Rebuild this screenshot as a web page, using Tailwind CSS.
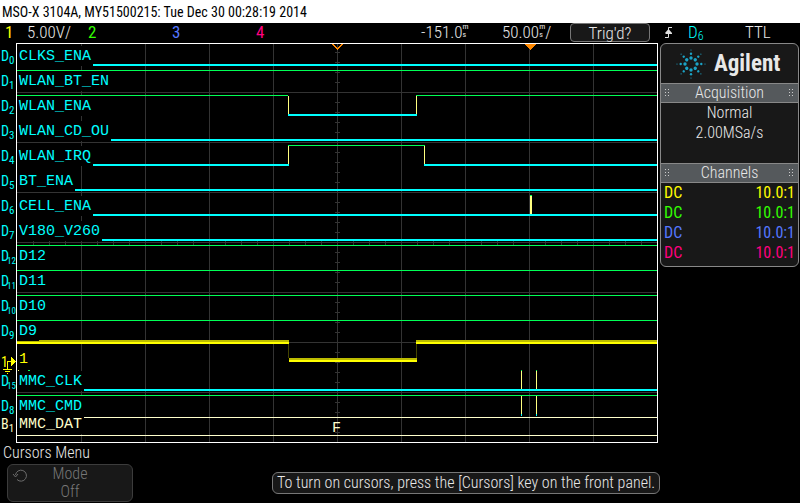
<!DOCTYPE html>
<html lang="en">
<head>
  <meta charset="UTF-8" />
  <meta name="viewport" content="width=device-width, initial-scale=1.0"/>
  <title>MSO-X 3104A</title>
  <script src="https://cdn.jsdelivr.net/npm/@tailwindcss/browser@4"></script>
</head>
<body class="bg-black text-[#e8e8e8] min-h-screen font-['Roboto_Condensed','Roboto',sans-serif] font-light text-[17px] leading-5">

  <!-- Title bar -->
  <header class="bg-white text-black h-[23px] px-0.5 text-[14px] leading-6 font-normal whitespace-nowrap">MSO-X 3104A, MY51500215: Tue Dec 30 00:28:19 2014</header>

  <!-- Status row -->
  <div class="grid grid-cols-[22px_61px_84px_84px_1fr_81px_68px_80px_14px_24px_57px_55px] h-5 pl-[5px] leading-[18px] whitespace-nowrap">
    <span class="text-[#ffff00] font-normal">1</span>
    <span>5.00V/</span>
    <span class="text-[#33ff00] font-normal">2</span>
    <span class="text-[#5577ff] font-normal">3</span>
    <span class="text-[#ff0080] font-normal">4</span>
    <span class="flex">-151.0<span class="flex flex-col text-[8px] leading-[8px] font-normal"><span>m</span><span>s</span></span></span>
    <span class="flex">50.00<span class="flex flex-col text-[8px] leading-[8px] font-normal"><span>m</span><span>s</span></span>/</span>
    <button class="h-[19px] border border-[#777] rounded bg-[#181818] leading-4">Trig'd?</button>
    <span></span>
    <svg class="w-3 h-4 mt-0.5" viewBox="0 0 12 16" fill="none" stroke="#e0e0e0">
      <path d="M1 12.500H4.500V2.500H8M1.500 8.500H8"/>
      <path d="M4.500 4L8 8H1Z" fill="#e0e0e0" stroke="none"/>
    </svg>
    <span class="flex text-[#00ffff]">D<span class="text-[12px] leading-[26px]">6</span></span>
    <span>TTL</span>
  </div>

  <div class="flex items-start">
    <!-- Scope display -->
    <main class="flex-1 flex">
      <ul id="gutter" class="w-4 pt-px pl-px text-[#00ffff] text-[14px] font-normal"></ul>
      <div class="relative flex-1 border border-white">
        <svg id="plot" class="block w-full h-[398px]" viewBox="0 0 640 398" preserveAspectRatio="none" shape-rendering="crispEdges"></svg>
        <ul id="names" class="absolute top-0 left-0 font-['Liberation_Mono',monospace] font-normal text-[15px] leading-[22px] text-[#00ffff]"></ul>
      </div>
    </main>

    <!-- Side panel -->
    <aside class="w-[142px] pl-0.5 pr-px">
      <div class="border border-[#888] rounded-md bg-[#181818] h-[224px] text-center">
        <div class="h-[39px] flex items-center gap-2 pl-[15px]">
          <svg id="spark" class="w-[30px] h-[30px]" viewBox="-15 -15 30 30" fill="#1ba3c6"></svg>
          <span class="text-[23px] font-bold leading-6">Agilent</span>
        </div>
        <h2 class="flex justify-between items-center h-5 px-1 bg-[#55595c] border-y border-[#888] text-[16px]">
          <svg class="w-1.5 h-2" viewBox="0 0 6 8" fill="#ccc"><path d="M0 0h1v1H0zM3 0h1v1H3zM0 3h1v1H0zM3 3h1v1H3zM0 6h1v1H0zM3 6h1v1H3z"/></svg>
          Acquisition
          <svg class="w-1.5 h-2" viewBox="0 0 6 8" fill="#ccc"><path d="M1 0h1v1H1zM4 0h1v1H4zM1 3h1v1H1zM4 3h1v1H4zM1 6h1v1H1zM4 6h1v1H4z"/></svg>
        </h2>
        <div class="h-[60px] text-[16px]">
          <p>Normal</p>
          <p>2.00MSa/s</p>
        </div>
        <h2 class="flex justify-between items-center h-5 px-1 bg-[#55595c] border-y border-[#888] text-[16px]">
          <svg class="w-1.5 h-2" viewBox="0 0 6 8" fill="#ccc"><path d="M0 0h1v1H0zM3 0h1v1H3zM0 3h1v1H0zM3 3h1v1H3zM0 6h1v1H0zM3 6h1v1H3z"/></svg>
          Channels
          <svg class="w-1.5 h-2" viewBox="0 0 6 8" fill="#ccc"><path d="M1 0h1v1H1zM4 0h1v1H4zM1 3h1v1H1zM4 3h1v1H4zM1 6h1v1H1zM4 6h1v1H4z"/></svg>
        </h2>
        <div class="px-[3px] font-normal text-[16px]">
          <p class="flex justify-between text-[#ffff00]"><span>DC</span><span>10.0:1</span></p>
          <p class="flex justify-between text-[#33ff00]"><span>DC</span><span>10.0:1</span></p>
          <p class="flex justify-between text-[#5577ff]"><span>DC</span><span>10.0:1</span></p>
          <p class="flex justify-between text-[#ff0080]"><span>DC</span><span>10.0:1</span></p>
        </div>
      </div>
    </aside>
  </div>

  <!-- Softkey menu -->
  <footer class="text-[16px]">
    <h2 class="pl-[3px] h-[21px]">Cursors Menu</h2>
    <div class="flex pl-[7px]">
      <button disabled class="relative w-[126px] h-[38px] border border-[#3c3c3c] rounded-md bg-[#181818] text-[#777777] text-[16px] leading-[18px]">
        <svg class="absolute left-1 top-1 w-4 h-3.5" viewBox="0 0 16 14" fill="none" stroke="#6c6c6c"><path d="M3.500 6A5.500 5.500 0 1 1 5 10.500M1 5L3.500 8L6 5"/></svg>
        Mode<br>Off
      </button>
      <p class="ml-[139px] mt-2 h-[22px] px-1 border border-[#777] rounded-md bg-[#181818] whitespace-nowrap">To turn on cursors, press the [Cursors] key on the front panel.</p>
    </div>
  </footer>

  <script>
    // [gutter letter, gutter index, signal name]
    const rows = [
      ["D", "0", "CLKS_ENA"], ["D", "1", "WLAN_BT_EN"], ["D", "2", "WLAN_ENA"], ["D", "3", "WLAN_CD_OU"],
      ["D", "4", "WLAN_IRQ"], ["D", "5", "BT_ENA"], ["D", "6", "CELL_ENA"], ["D", "7", "V180_V260"],
      ["D", "12", "D12"], ["D", "11", "D11"], ["D", "10", "D10"], ["D", "9", "D9"],
      ["1", "", "1"], ["D", "15", "MMC_CLK"], ["D", "8", "MMC_CMD"], ["B", "1", "MMC_DAT"]
    ];

    let gutter = "", names = "";
    rows.forEach(([letter, index, name]) => {
      const height = name === "MMC_CMD" ? "h-[18px]" : name === "MMC_DAT" ? "h-[22px]" : "h-[25px]";
      const color = name === "MMC_DAT" ? "text-[#ffffcc]" : name === "1" ? "text-[#ffff00]" : "";
      const pad = name === "1" ? "pt-[5px]" : "pt-0.5";
      if (name === "1") {
        gutter += `<li class="${height} ${color} relative leading-9">1<svg class="absolute left-0 top-0 w-[15px] h-[30px]" viewBox="0 0 15 30" fill="none" stroke="#ffff00" shape-rendering="crispEdges">
          <path d="M6.500 25V17.500H11M2 25.500H11M4 27.500H9M6 29.500H7"/><path d="M10 12L15 17.500L10 23Z" fill="#ffff00" stroke="none"/></svg></li>`;
      } else {
        const size = index.length > 1 ? "text-[9px] -ml-0.5" : "text-[11px]";
        gutter += `<li class="${height} ${color} flex leading-6">${letter}<span class="${size} leading-[34px]">${index}</span></li>`;
      }
      names += `<li class="${height} ${color} ${pad}"><span class="block w-fit h-5 px-0.5 bg-black">${name}</span></li>`;
    });
    document.getElementById("gutter").innerHTML = gutter;
    document.getElementById("names").innerHTML = names;

    const rect = (x, y, w, h, fill) => `<rect x="${x}" y="${y}" width="${w}" height="${h}" fill="${fill}"/>`;
    const GRID = "#333333", CYAN = "#00ffff", GREEN = "#00ff55", EDGE = "#ffff80", BUS = "#ffffcc";
    let p = "";

    // Graticule
    for (let x = 64; x < 640; x += 64) p += rect(x, 0, 1, 398, GRID);
    for (let y = 48; y < 398; y += 50) p += rect(0, y, 640, 1, GRID);
    for (let y = 8; y < 398; y += 10) p += rect(318, y, 5, 1, GRID);
    for (let x = 16; x < 640; x += 16) p += rect(x, 197, 1, 4, GRID);

    // Low and high levels
    [20, 95, 145, 170, 195, 345].forEach(y => p += rect(0, y, 640, 2, CYAN));
    [26, 201, 226, 251, 276, 351].forEach(y => p += rect(0, y, 640, 1, GREEN));

    // D2 pulse
    p += rect(0, 51, 271, 1, GREEN) + rect(399, 51, 241, 1, GREEN);
    p += rect(271, 52, 1, 18, EDGE) + rect(399, 52, 1, 18, EDGE) + rect(271, 70, 129, 2, CYAN);
    // D4 pulse
    p += rect(0, 120, 272, 2, CYAN) + rect(407, 120, 233, 2, CYAN);
    p += rect(271, 102, 1, 18, EDGE) + rect(407, 102, 1, 18, EDGE) + rect(271, 101, 137, 1, GREEN);
    // D6 glitch
    p += rect(513, 152, 2, 18, EDGE) + rect(513, 151, 2, 1, GREEN);

    // Analog channel 1
    [[0, 296, 272], [399, 296, 241], [272, 314, 128]].forEach(([x, y, w]) => {
      p += rect(x, y, w, 2, "#bbbb00") + rect(x, y + 2, w, 2, "#ffff00");
    });
    p += rect(271, 300, 1, 14, "#444400") + rect(399, 300, 1, 14, "#444400");

    // MMC bursts
    [504, 519].forEach(x => {
      p += rect(x, 326, 1, 1, GREEN) + rect(x, 327, 1, 18, EDGE);
      p += rect(x, 352, 1, 18, EDGE) + rect(x, 370, 1, 2, CYAN);
    });
    p += rect(1, 326, 1, 2, EDGE) + rect(11, 326, 2, 1, GREEN) + rect(11, 327, 2, 1, EDGE);
    p += rect(1, 352, 1, 1, EDGE) + rect(11, 352, 2, 1, EDGE);

    // Bus
    p += rect(0, 373, 640, 1, BUS) + rect(0, 391, 640, 1, BUS);
    p += `<text x="315" y="388" font-family="Liberation Mono, monospace" font-size="15" font-weight="400" fill="${BUS}">F</text>`;

    // Trigger and time reference markers
    p += `<path d="M315 0L320.500 5L326 0" fill="none" stroke="#ff8800" stroke-width="1.500"/>`;
    p += `<path d="M508 0H519L513.500 6Z" fill="#ff8800"/>`;
    document.getElementById("plot").innerHTML = p;

    // Spark logo: eight rays of shrinking dots
    let s = "";
    for (let a = 0; a < 360; a += 45) {
      [[6, 1.7], [10.3, 1.2], [14, 0.6]].forEach(([d, r]) => {
        s += `<circle cx="${d}" cy="0" r="${r}" transform="rotate(${a})"/>`;
      });
    }
    document.getElementById("spark").innerHTML = s;
  </script>
</body>
</html>
